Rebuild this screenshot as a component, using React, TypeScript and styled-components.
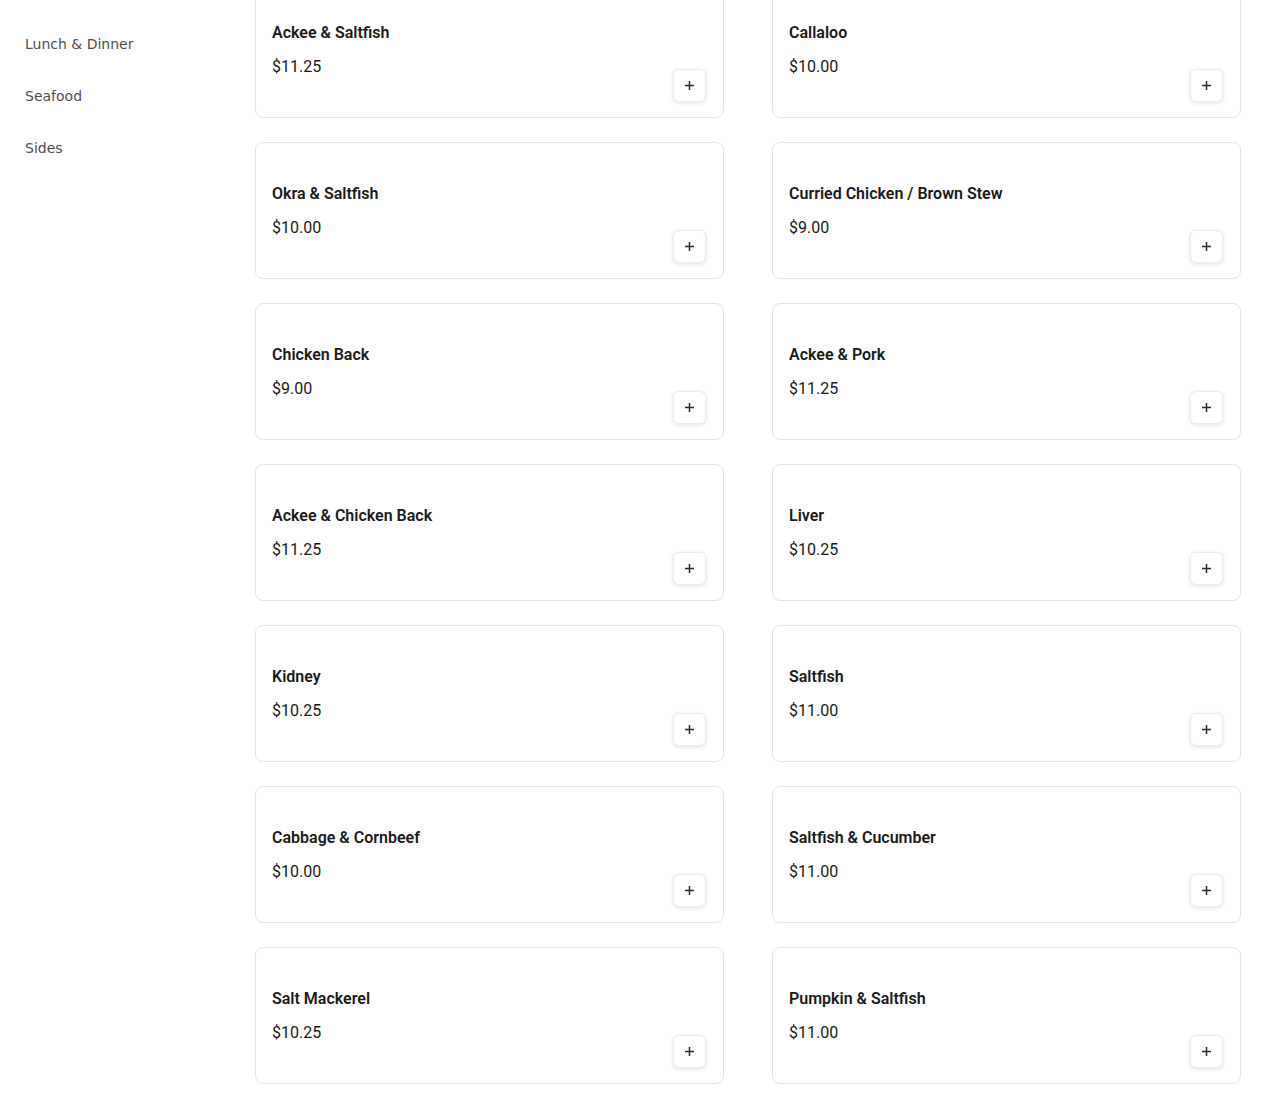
import React from "react";
import styled, { createGlobalStyle } from "styled-components";

const GlobalStyle = createGlobalStyle`
  html, body {
    margin: 0;
    padding: 0;
    background: #ffffff;
  }
  body {
    font-family: "Roboto", "Liberation Sans", sans-serif;
    color: #1a1a1a;
    overflow: hidden;
  }
  * {
    box-sizing: border-box;
  }
`;

const Layout = styled.div`
  display: flex;
  width: 1270px;
  height: 1096px;
  overflow: hidden;
`;

const Sidebar = styled.nav`
  width: 255px;
  flex-shrink: 0;
  display: flex;
  flex-direction: column;
  padding: 18px 25px;
`;

const NavLink = styled.a`
  font-family: "DejaVu Sans", sans-serif;
  font-size: 14px;
  line-height: 20px;
  padding: 16px 0;
  color: #505050;
  text-decoration: none;
  cursor: pointer;
`;

const Main = styled.main`
  flex: 1;
  padding-right: 29px;
`;

const Grid = styled.div`
  display: grid;
  grid-template-columns: repeat(2, 1fr);
  column-gap: 48px;
  row-gap: 24px;
  margin-top: -19px;
`;

const Card = styled.div`
  height: 137px;
  display: flex;
  justify-content: space-between;
  border: 1px solid #e4e4e4;
  border-radius: 8px;
  background: #ffffff;
  padding: 16px 17px 15px 16px;
`;

const Info = styled.div`
  display: flex;
  flex-direction: column;
  gap: 10px;
  padding-top: 23px;
`;

const Title = styled.h3`
  margin: 0;
  font-size: 16px;
  line-height: 24px;
  font-weight: 600;
  color: #1a1a1a;
`;

const Price = styled.span`
  font-size: 16px;
  line-height: 24px;
  font-weight: 400;
  color: #1a1a1a;
`;

const AddButton = styled.button`
  align-self: flex-end;
  width: 33px;
  height: 33px;
  padding: 0;
  display: flex;
  align-items: center;
  justify-content: center;
  border: 1px solid #ececec;
  border-radius: 6px;
  background: #ffffff;
  box-shadow: 0 1px 4px rgba(0, 0, 0, 0.12);
  color: #2a2a2a;
  cursor: pointer;
`;

const items = [
  { name: "Ackee & Saltfish", price: "$11.25" },
  { name: "Callaloo", price: "$10.00" },
  { name: "Okra & Saltfish", price: "$10.00" },
  { name: "Curried Chicken / Brown Stew", price: "$9.00" },
  { name: "Chicken Back", price: "$9.00" },
  { name: "Ackee & Pork", price: "$11.25" },
  { name: "Ackee & Chicken Back", price: "$11.25" },
  { name: "Liver", price: "$10.25" },
  { name: "Kidney", price: "$10.25" },
  { name: "Saltfish", price: "$11.00" },
  { name: "Cabbage & Cornbeef", price: "$10.00" },
  { name: "Saltfish & Cucumber", price: "$11.00" },
  { name: "Salt Mackerel", price: "$10.25" },
  { name: "Pumpkin & Saltfish", price: "$11.00" },
];

const PlusIcon = () => (
  <svg width="11" height="11" viewBox="0 0 11 11" fill="none">
    <path d="M5.5 1v9M1 5.5h9" stroke="currentColor" strokeWidth="1.5" />
  </svg>
);

export default function App() {
  return (
    <>
      <GlobalStyle />
      <Layout>
        <Sidebar>
          <NavLink>Lunch &amp; Dinner</NavLink>
          <NavLink>Seafood</NavLink>
          <NavLink>Sides</NavLink>
        </Sidebar>
        <Main>
          <Grid>
            {items.map((item) => (
              <Card key={item.name}>
                <Info>
                  <Title>{item.name}</Title>
                  <Price>{item.price}</Price>
                </Info>
                <AddButton aria-label={`Add ${item.name}`}>
                  <PlusIcon />
                </AddButton>
              </Card>
            ))}
          </Grid>
        </Main>
      </Layout>
    </>
  );
}
